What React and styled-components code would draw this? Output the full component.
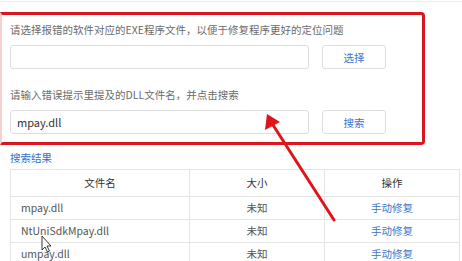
import React from 'react';
import styled, { createGlobalStyle } from 'styled-components';

const GlobalStyle = createGlobalStyle`
  html, body {
    margin: 0;
    padding: 0;
    background: #fff;
  }
  body {
    font-family: "Noto Sans CJK SC", "Noto Sans", "Liberation Sans", sans-serif;
    color: #333;
  }
`;

const Page = styled.div`
  position: relative;
  width: 462px;
  height: 261px;
  overflow: hidden;
  border-top: 1px solid #f0f0f0;
  margin-top: 1px;
  box-sizing: border-box;
`;

/* 红框标注的表单区域 */
const Marked = styled.section`
  margin-top: 10px;
  width: 425px;
  box-sizing: border-box;
  border: 3px solid #d9161d;
  border-left: 2px solid #f6cfcf;
  border-radius: 0 4px 4px 0;
  padding: 7px 0 8px 8px;
`;

const Label = styled.div`
  font-size: 10.5px;
  line-height: 16px;
  color: #6a6a6a;
  margin-top: ${(p) => (p.$gap ? '18px' : '0')};
  white-space: nowrap;
`;

const Row = styled.div`
  display: flex;
  gap: 13px;
  margin-top: 7px;
`;

const Input = styled.div`
  width: 299px;
  height: 24px;
  box-sizing: border-box;
  border: 1px solid #dedede;
  border-radius: 3px;
  padding: 0 6px;
  font-size: 11px;
  line-height: 22px;
  color: #333;
`;

const Button = styled.div`
  width: 64px;
  height: 24px;
  box-sizing: border-box;
  border: 1px solid #dedede;
  border-radius: 3px;
  display: flex;
  align-items: center;
  justify-content: center;
  font-size: 10.5px;
  color: #3b74c6;
`;

const ResultTitle = styled.div`
  margin: 5px 0 3px 10px;
  font-size: 10.5px;
  line-height: 16px;
  color: #2f6fcf;
`;

const Table = styled.table`
  margin-left: 10px;
  width: 449px;
  border-collapse: collapse;
  table-layout: fixed;
  font-size: 10.5px;
  line-height: 14px;
`;

const Th = styled.th`
  height: 26px;
  border: 1px solid #e4e4e4;
  font-weight: normal;
  color: #333;
  text-align: center;
  padding: 0;
`;

const Td = styled.td`
  height: 22px;
  border: 1px solid #e4e4e4;
  padding: 0 ${(p) => (p.$left ? '10px' : '0')};
  text-align: ${(p) => (p.$left ? 'left' : 'center')};
  color: ${(p) => (p.$link ? '#3b74c6' : '#555')};
  white-space: nowrap;
`;

const Overlay = styled.svg`
  position: absolute;
  left: 0;
  top: 0;
  pointer-events: none;
`;

const rows = ['mpay.dll', 'NtUniSdkMpay.dll', 'umpay.dll'];

export default function App() {
  return (
    <Page>
      <GlobalStyle />
      <Marked>
        <Label>请选择报错的软件对应的EXE程序文件，以便于修复程序更好的定位问题</Label>
        <Row>
          <Input />
          <Button>选择</Button>
        </Row>
        <Label $gap>请输入错误提示里提及的DLL文件名，并点击搜索</Label>
        <Row>
          <Input>mpay.dll</Input>
          <Button>搜索</Button>
        </Row>
      </Marked>
      <ResultTitle>搜索结果</ResultTitle>
      <Table>
        <colgroup>
          <col style={{ width: 179 }} />
          <col style={{ width: 135 }} />
          <col style={{ width: 135 }} />
        </colgroup>
        <thead>
          <tr>
            <Th>文件名</Th>
            <Th>大小</Th>
            <Th>操作</Th>
          </tr>
        </thead>
        <tbody>
          {rows.map((name) => (
            <tr key={name}>
              <Td $left>{name}</Td>
              <Td>未知</Td>
              <Td $link>手动修复</Td>
            </tr>
          ))}
        </tbody>
      </Table>

      <Overlay width="462" height="261" viewBox="0 0 462 261">
        <line x1="334" y1="218" x2="273" y2="123" stroke="#e0141b" strokeWidth="3" strokeLinecap="round" />
        <polygon points="267,112 265,128 280,120" fill="#e0141b" />
        <path
          d="M42 234 L42 248 L45 245 L47.5 250 L49.5 249 L47 244 L51 244 Z"
          fill="#fff"
          stroke="#222"
          strokeWidth="0.9"
          strokeLinejoin="round"
        />
      </Overlay>
    </Page>
  );
}
